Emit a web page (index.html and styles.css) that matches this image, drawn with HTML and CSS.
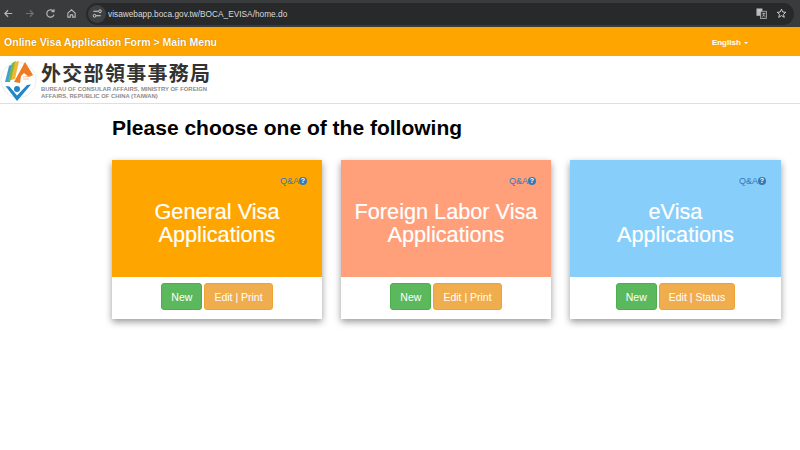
FILE: index.html
```html
<!DOCTYPE html>
<html lang="en">
<head>
  <meta charset="UTF-8">
  <title>Online Visa Application Form</title>
  <link rel="stylesheet" href="styles.css">
</head>
<body>
  <div class="browser-bar">
    <svg class="nav-icon" viewBox="0 0 12 12"><path d="M10 6H2M5.500 2.500 2 6l3.500 3.500" fill="none" stroke="#b4b6b8" stroke-width="1.300"/></svg>
    <svg class="nav-icon" viewBox="0 0 12 12"><path d="M2 6h8M6.500 2.500 10 6l-3.500 3.500" fill="none" stroke="#6f7174" stroke-width="1.300"/></svg>
    <svg class="nav-icon" viewBox="0 0 12 12"><path d="M9.800 7.200A4 4 0 1 1 9 3.400M9.800 1.400v2.700H7.100" fill="none" stroke="#b4b6b8" stroke-width="1.300"/></svg>
    <svg class="nav-icon" viewBox="0 0 12 12"><path d="M2 5.500 6 2l4 3.500V10H7.300V7.500H4.700V10H2z" fill="none" stroke="#b4b6b8" stroke-width="1.200"/></svg>
    <div class="address">
      <span class="site-icon">
        <svg viewBox="0 0 12 12"><path d="M1.500 3.500h5M9.500 8.500h-5" fill="none" stroke="#d5d7d8" stroke-width="1.100"/><circle cx="8.700" cy="3.500" r="1.500" fill="none" stroke="#d5d7d8"/><circle cx="2.800" cy="8.500" r="1.500" fill="none" stroke="#d5d7d8"/></svg>
      </span>
      <span class="url">visawebapp.boca.gov.tw/BOCA_EVISA/home.do</span>
      <svg class="translate-icon" viewBox="0 0 12 12"><rect x="0.500" y="0.500" width="6.500" height="8" fill="#b9bbbd"/><rect x="5" y="3.500" width="6.500" height="8" fill="#3b3c3e" stroke="#b9bbbd" stroke-width="0.800"/><path d="M2 3h3.500M3.700 2v1M7 6h3M8.500 6c0 2-.8 3-1.500 3.500M8 7.500l2 2" fill="none" stroke="#d8d9da" stroke-width="0.700"/></svg>
      <svg class="star-icon" viewBox="0 0 12 12"><path d="m6 1.300 1.400 3.100 3.300.3-2.500 2.200.8 3.300L6 8.300l-3 1.900.8-3.300-2.500-2.200 3.300-.3z" fill="none" stroke="#d5d7d8" stroke-width="1"/></svg>
    </div>
  </div>

  <header class="top-bar">
    <span class="form-title">Online Visa Application Form &gt; Main Menu</span>
    <span class="language">English <i class="caret"></i></span>
  </header>

  <div class="logo-row">
    <svg class="logo-mark" viewBox="0 0 40 44">
      <circle cx="18.500" cy="22" r="17.500" fill="#fff" stroke="#e3e6e8" stroke-width="0.800"/>
      <path d="M5 24 9 8l4-2-3 18z" fill="#3f9fd8"/>
      <path d="M8 23 12 5l4-2-3 18z" fill="#7cb944"/>
      <path d="M11 22 15 4l4-1-4 18z" fill="#f2b632"/>
      <path d="M14 24 25 4l8 13-4 2-5-4-3 3-1 7z" fill="#ee7a22"/>
      <path d="M23 19l8-1M23 21l6 0" stroke="#f2a878" stroke-width="0.700"/>
      <circle cx="17" cy="31" r="3" fill="#1f86c8"/>
      <path d="M5.500 28 17 43 31 26.500l-4 .500-10 10.500-7.500-9z" fill="#1f86c8"/>
    </svg>
    <div class="logo-text">
      <div class="logo-zh">外交部領事事務局</div>
      <div class="logo-en">BUREAU OF CONSULAR AFFAIRS, MINISTRY OF FOREIGN<br>AFFAIRS, REPUBLIC OF CHINA (TAIWAN)</div>
    </div>
  </div>

  <main class="content">
    <h1>Please choose one of the following</h1>
    <div class="cards">
      <section class="card">
        <div class="card-top orange">
          <a class="qa">Q&amp;A<i class="qa-icon">?</i></a>
          <h2>General Visa<br>Applications</h2>
        </div>
        <div class="card-actions">
          <button class="btn btn-new">New</button>
          <button class="btn btn-edit">Edit | Print</button>
        </div>
      </section>
      <section class="card">
        <div class="card-top salmon">
          <a class="qa">Q&amp;A<i class="qa-icon">?</i></a>
          <h2>Foreign Labor Visa<br>Applications</h2>
        </div>
        <div class="card-actions">
          <button class="btn btn-new">New</button>
          <button class="btn btn-edit">Edit | Print</button>
        </div>
      </section>
      <section class="card">
        <div class="card-top sky">
          <a class="qa">Q&amp;A<i class="qa-icon">?</i></a>
          <h2>eVisa<br>Applications</h2>
        </div>
        <div class="card-actions">
          <button class="btn btn-new">New</button>
          <button class="btn btn-edit">Edit | Status</button>
        </div>
      </section>
    </div>
  </main>
</body>
</html>
```

FILE: styles.css
```css
* {
  box-sizing: border-box;
}
html, body {
  height: 450px;
  overflow: hidden;
}
body {
  margin: 0;
  font-family: "Liberation Sans", Arial, sans-serif;
  background-color: #fff;
  color: #000;
}
.browser-bar {
  display: flex;
  align-items: center;
  gap: 10px;
  height: 27px;
  background-color: #3a3b3d;
  padding-left: 2.500px;
}
.nav-icon {
  width: 11px;
  height: 11px;
  flex: none;
}
.address {
  display: flex;
  align-items: center;
  width: 708px;
  height: 22px;
  margin-left: -0.500px;
  border-radius: 11px;
  background-color: #28292a;
}
.site-icon {
  display: flex;
  align-items: center;
  justify-content: center;
  width: 18px;
  height: 18px;
  margin-left: 2px;
  border-radius: 50%;
  background-color: #3f4042;
}
.site-icon svg {
  width: 11px;
  height: 11px;
}
.url {
  margin-left: 2px;
  flex: 1;
  font-size: 8.300px;
  color: #d9dadb;
}
.translate-icon {
  width: 11px;
  height: 11px;
}
.star-icon {
  width: 11px;
  height: 11px;
  margin: 0 7.500px 0 8.500px;
}
.top-bar {
  display: flex;
  align-items: center;
  justify-content: space-between;
  height: 29px;
  background-color: #ffa500;
  color: #fff;
  padding: 1px 52px 0 4px;
}
.form-title {
  font-size: 10.550px;
  font-weight: bold;
  text-shadow: 0 0 1px rgba(90, 60, 0, 0.6);
}
.language {
  margin-top: 1px;
  font-size: 8px;
  font-weight: bold;
}
.caret {
  display: inline-block;
  margin-left: 1px;
  vertical-align: middle;
  border-top: 2px solid #fff;
  border-left: 2px solid transparent;
  border-right: 2px solid transparent;
}
.logo-row {
  display: flex;
  align-items: flex-start;
  height: 48px;
  padding-top: 2px;
  border-bottom: 1px solid #dfdfdf;
}
.logo-mark {
  width: 40px;
  height: 44px;
  flex: none;
}
.logo-text {
  margin: 3px 0 0 1px;
}
.logo-zh {
  font-family: "Noto Sans CJK TC", sans-serif;
  font-size: 20px;
  font-weight: bold;
  line-height: 24px;
  letter-spacing: 1.300px;
  color: #333;
}
.logo-en {
  margin-top: 1px;
  font-size: 5.900px;
  font-weight: bold;
  line-height: 6.500px;
  color: #8b8b8b;
  white-space: nowrap;
}
.content {
  padding: 12px 0 0 112px;
}
h1 {
  margin: 0 0 20px;
  font-size: 21px;
  line-height: 24px;
  font-weight: bold;
}
.cards {
  display: flex;
  gap: 19px;
}
.card {
  width: 210px;
  height: 159px;
  background-color: #fff;
  box-shadow: 0 3px 7px rgba(0, 0, 0, 0.4);
}
.card:last-child {
  width: 211px;
}
.card-top {
  position: relative;
  height: 117px;
  padding-top: 40px;
  text-align: center;
  color: #fff;
}
.orange {
  background-color: #ffa500;
}
.salmon {
  background-color: #ffa07a;
}
.sky {
  background-color: #87cefa;
}
.card-top h2 {
  margin: 0;
  font-size: 21.700px;
  line-height: 23px;
  font-weight: normal;
  -webkit-text-stroke: 0.2px #fff;
}
.qa {
  position: absolute;
  top: 16px;
  right: 15px;
  display: flex;
  align-items: center;
  font-size: 9px;
  color: #337ab7;
}
.qa-icon {
  display: block;
  width: 8px;
  height: 8px;
  border-radius: 50%;
  background-color: #337ab7;
  color: #fff;
  font-size: 7px;
  font-style: normal;
  font-weight: bold;
  line-height: 8px;
  text-align: center;
}
.card-actions {
  display: flex;
  justify-content: center;
  gap: 2px;
  padding-top: 6px;
}
.btn {
  height: 27px;
  padding: 0 9px;
  border: 1px solid transparent;
  border-radius: 3px;
  color: #fff;
  font-family: inherit;
  font-size: 10.500px;
  cursor: pointer;
}
.btn-new {
  width: 41px;
  padding: 0;
  background-color: #5cb85c;
  border-color: #4cae4c;
}
.btn-edit {
  background-color: #f0ad4e;
  border-color: #eea236;
}
```
